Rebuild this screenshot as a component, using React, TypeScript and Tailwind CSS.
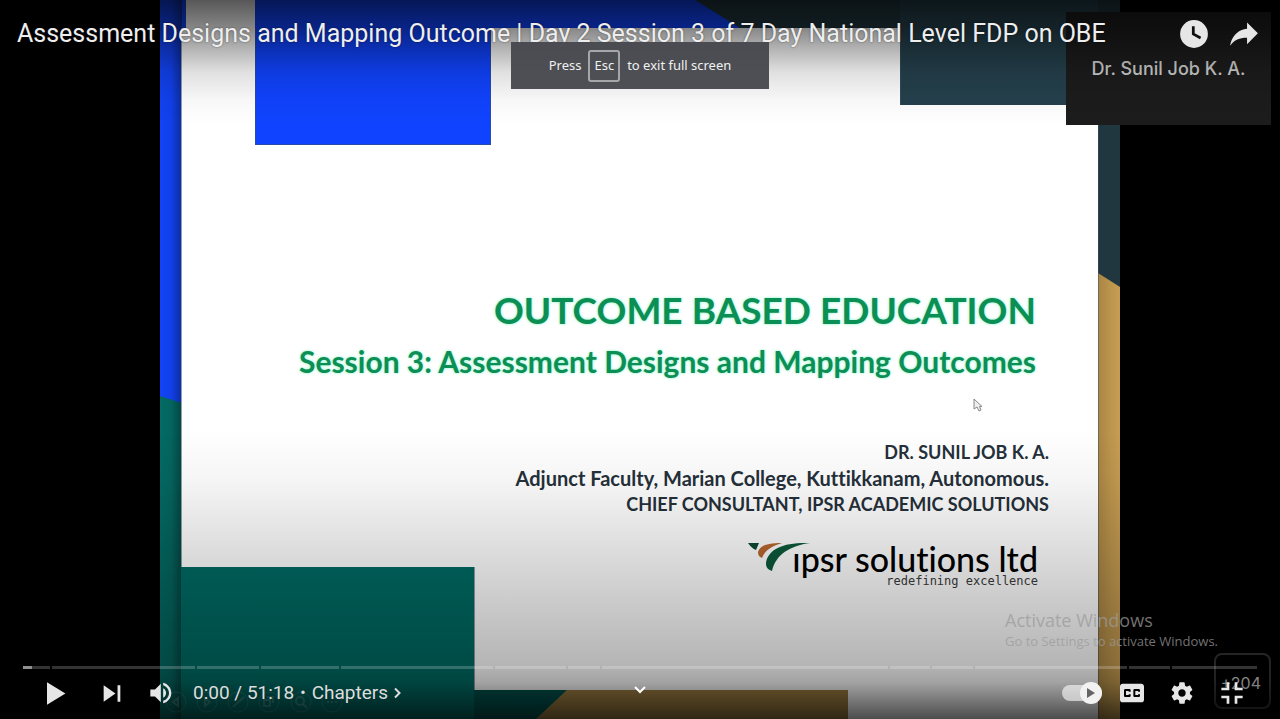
import type { ReactNode } from "react";

// chapter lengths along the seek bar
const chapters = [27, 143, 62, 78, 152, 71, 32, 287, 40, 41, 152, 41, 85];

const slideTools = [16, 47, 78, 109, 141, 172];

function Icon({ className, children }: { className: string; children: ReactNode }) {
  return (
    <svg viewBox="0 0 36 36" fill="currentColor" fillRule="evenodd" className={className} aria-hidden="true">
      {children}
    </svg>
  );
}

function ControlButton({ label, className = "w-[50px]", children }: { label: string; className?: string; children: ReactNode }) {
  return (
    <button type="button" aria-label={label} className={`flex h-12 shrink-0 items-center justify-center ${className}`}>
      {children}
    </button>
  );
}

function SlideArt() {
  return (
    <svg viewBox="0 0 960 719" preserveAspectRatio="none" className="absolute inset-0 h-full w-full" aria-hidden="true">
      <defs>
        <linearGradient id="edge" x1="0" x2="1">
          <stop offset="0" stopColor="#000" stopOpacity="0" />
          <stop offset="0.5" stopColor="#000" stopOpacity="0.05" />
          <stop offset="1" stopColor="#000" stopOpacity="0.35" />
        </linearGradient>
        <linearGradient id="gold" x1="0" x2="1">
          <stop offset="0" stopColor="#a98443" />
          <stop offset="0.6" stopColor="#bd964d" />
          <stop offset="1" stopColor="#c79c52" />
        </linearGradient>
      </defs>
      <path d="M0 0H535L700 120V420H0Z" fill="#1243f5" />
      <path d="M0 396L22 403L500 560V719H0Z" fill="#046a64" />
      <path d="M535 0H960V288L938 274L580 40Z" fill="#21373f" />
      <path d="M938 273L960 287V719H938Z" fill="url(#gold)" />
      <rect x="0" y="0" width="22" height="719" fill="url(#edge)" />
      <rect x="26" y="0" width="70" height="28" fill="#fff" />
      <path d="M21 28H938V719H688V690H21Z" fill="#fff" />
      <path d="M95 0H535L580 28H331V145H95Z" fill="#1043ff" />
      <rect x="740" y="0" width="198" height="105" fill="#25414d" />
      <rect x="21" y="567" width="293" height="152" fill="#006b64" />
      <path d="M314 690H406L376 719H314Z" fill="#00554f" />
      <path d="M407 690H688V719H376Z" fill="#a28143" />
      <path d="M21.500 28V567M95.500 28V144.500H330.500V28M740.500 28V105M314.500 567V690M938.500 105V719" fill="none" stroke="#3d5560" strokeOpacity="0.55" />
      {slideTools.map((x) => (
        <circle key={x} cx={x} cy="702" r="10" fill="none" stroke="#8fb5b0" strokeOpacity="0.25" />
      ))}
      <g fill="none" stroke="#8fb5b0" strokeOpacity="0.35" strokeWidth="2">
        <path d="M18 698L13 702L18 706Z M45 698L50 702L45 706Z M73 707L84 697 M104 700h6v6h-6z M107 697h6v6" />
        <circle cx="140" cy="701" r="4" />
        <path d="M143 704L147 708M167 702h2M171 702h2M175 702h2" />
      </g>
    </svg>
  );
}

function Slide() {
  return (
    <div className="relative mx-auto h-full w-3/4 text-right font-['Lato',sans-serif] font-bold [font-variant-ligatures:none]">
      <SlideArt />
      <div className="relative pt-[287px] pr-[84px] text-[#0c8f55] [text-shadow:0_0_3px_#7df0c0]">
        <h2 className="text-[37px] leading-[46px]">OUTCOME BASED EDUCATION</h2>
        <h3 className="mt-2 text-[30px] leading-10">Session 3: Assessment Designs and Mapping Outcomes</h3>
      </div>
      <div className="relative mt-[58px] pr-[71px] text-[18px] leading-[26px] text-[#25303a]">
        <p>DR. SUNIL JOB K. A.</p>
        <p className="text-[20px]">Adjunct Faculty, Marian College, Kuttikkanam, Autonomous.</p>
        <p>CHIEF CONSULTANT, IPSR ACADEMIC SOLUTIONS</p>
      </div>
      <div className="relative mt-[26px] flex items-start justify-end pr-[82px] text-black">
        <svg viewBox="0 0 62 32" className="-mr-[18px] h-8 w-[62px]" aria-hidden="true">
          <path d="M0 0H11L8 7C5 6 2 3 0 0Z" fill="#0c4a34" />
          <path d="M10 9C12 3 18 0 34 0C24 3 17 7 14 15C11 14 10 12 10 9Z" fill="#b8682f" />
          <path d="M18 20C20 7 34 -1 62 0C42 3 28 11 24 28C19 26 18 24 18 20Z" fill="#0c5a3c" />
        </svg>
        <div className="flex flex-col items-end">
          <p className="text-[34px] leading-8 font-medium">ıpsr solutions ltd</p>
          <p className="font-['DejaVu_Sans_Mono',monospace] text-[12px] leading-3 font-normal text-[#3a3a3a]">redefining excellence</p>
        </div>
      </div>
      <svg viewBox="0 0 10 14" className="absolute top-[398px] right-[137px] h-3.5 w-2.5" aria-hidden="true">
        <path d="M1 1V11L4 9L6 13L8 12L6.500 8.500H9Z" fill="#eee" stroke="#888" />
      </svg>
    </div>
  );
}

export default function App() {
  return (
    <main className="relative h-screen w-full overflow-hidden bg-black font-['Roboto',sans-serif] text-[#e6e6e6]">
      <Slide />

      {/* meeting tiles that are part of the recording */}
      <div className="absolute top-3 right-[9px] h-[113px] w-[205px] bg-[#1c1c1c] pt-[45px] text-center font-['Inter',sans-serif] text-[18px] leading-6 font-medium text-[#cfcfcf]">
        Dr. Sunil Job K. A.
      </div>
      <div className="absolute right-[9px] bottom-[10px] h-14 w-[57px] rounded-lg border-2 border-[#333] pt-4 pr-2 text-right font-['Inter',sans-serif] text-[16px] leading-6 text-[#d0d0d0]">
        +204
      </div>

      <div className="absolute inset-x-0 top-0 h-[125px] bg-[linear-gradient(rgba(0,0,0,0.66)_0,rgba(0,0,0,0.47)_28px,rgba(0,0,0,0.3)_48px,rgba(0,0,0,0.12)_72px,rgba(0,0,0,0.03)_100px,transparent_125px)]" />
      <div className="absolute inset-x-0 bottom-0 h-[289px] bg-[linear-gradient(transparent_0,rgba(0,0,0,0.04)_50px,rgba(0,0,0,0.15)_130px,rgba(0,0,0,0.23)_190px,rgba(0,0,0,0.29)_235px,rgba(0,0,0,0.36)_252px,rgba(0,0,0,0.7)_289px)]" />

      <header className="absolute inset-x-0 top-0 flex h-[67px] items-center pr-[11px] pl-[17px]">
        <h1 className="flex-1 truncate text-[25px] leading-8 text-[#eee] [text-shadow:0_0_2px_rgba(0,0,0,0.5)]">
          Assessment Designs and Mapping Outcome | Day 2 Session 3 of 7 Day National Level FDP on OBE
        </h1>
        <ControlButton label="Watch later">
          <Icon className="size-[50px]">
            <path d="M18 8a10 10 0 1 0 0 20a10 10 0 1 0 0-20ZM16.500 12.500H18.500V17.500L23.200 20L22.300 21.800L16.500 18.600Z" />
          </Icon>
        </ControlButton>
        <ControlButton label="Share">
          <Icon className="size-[50px]">
            <path d="m 20.20,14.19 0,-4.45 7.79,7.79 -7.79,7.79 0,-4.56 C 16.27,20.69 12.10,21.81 9.34,24.76 8.80,25.13 7.60,27.29 8.12,25.65 9.08,21.32 11.80,17.18 15.98,15.38 c 1.33,-0.60 2.76,-0.98 4.21,-1.19 z" />
          </Icon>
        </ControlButton>
      </header>

      <div className="absolute top-[42px] left-1/2 flex h-[47px] w-[258px] -translate-x-1/2 items-center justify-center gap-[7px] bg-[#45474c]/95 font-['Noto_Sans',sans-serif] text-[13px] text-[#f0f0f0]">
        <span>Press</span>
        <kbd className="flex h-8 items-center rounded-[3px] border-2 border-[#a5a6a8] px-1 font-['Noto_Sans',sans-serif]">Esc</kbd>
        <span>to exit full screen</span>
      </div>

      <div className="absolute top-[608px] left-[1005px] font-['Open_Sans',sans-serif] text-[#9b9b9b]/75">
        <p className="text-[18px] leading-6">Activate Windows</p>
        <p className="text-[13px] leading-[18px]">Go to Settings to activate Windows.</p>
      </div>

      <footer className="absolute inset-x-0 bottom-0 h-[53px] px-[23px]">
        <div className="relative flex h-[3px] gap-0.5">
          {chapters.map((length, i) => (
            <div key={i} className="h-full basis-0 bg-white/20" style={{ flexGrow: length }}>
              {i === 0 && <div className="h-full w-1/3 bg-white/45" />}
            </div>
          ))}
          <input type="range" aria-label="Seek" defaultValue={0} className="absolute inset-0 h-full w-full opacity-0" />
        </div>

        <div className="flex h-12 items-center">
          <ControlButton label="Play" className="w-16">
            <Icon className="size-[51px]">
              <path d="M12 10L25 18L12 26Z" />
            </Icon>
          </ControlButton>
          <ControlButton label="Next">
            <Icon className="size-[51px]">
              <path d="M12 24L20.500 18L12 12ZM22 12V24H24V12Z" />
            </Icon>
          </ControlButton>
          <ControlButton label="Mute">
            <Icon className="size-[42px]">
              <path d="M8,21 L12,21 L17,26 L17,10 L12,15 L8,15 Z M19,14 L19,22 C20.48,21.32 21.5,19.77 21.5,18 C21.5,16.26 20.48,14.74 19,14 Z M19,11.29 C21.89,12.15 24,14.83 24,18 C24,21.17 21.89,23.85 19,24.71 L19,26.77 C23.01,25.86 26,22.28 26,18 C26,13.72 23.01,10.14 19,9.23 Z" />
            </Icon>
          </ControlButton>
          <div className="flex flex-1 items-center pl-1.5 text-[19px] text-[#ddd]">
            <span>0:00 / 51:18</span>
            <span className="px-1.5 text-[16px]">•</span>
            <button type="button" className="flex items-center">
              Chapters
              <svg viewBox="0 0 8 12" className="ml-1.5 h-3 w-2" fill="none" stroke="currentColor" strokeWidth="2" aria-hidden="true">
                <path d="M1 1.500L5.500 6L1 10.500" />
              </svg>
            </button>
          </div>
          <label className="relative flex w-[50px] items-center justify-center">
            <input type="checkbox" defaultChecked aria-label="Autoplay" className="absolute inset-0 opacity-0" />
            <span className="flex h-4 w-10 items-center justify-end rounded-full bg-white/60">
              <span className="flex size-[22px] shrink-0 items-center justify-center rounded-full bg-[#f2f2f2] text-[#666]">
                <svg viewBox="0 0 8 10" className="h-2.5 w-2" fill="currentColor" aria-hidden="true">
                  <path d="M0 0L8 5L0 10Z" />
                </svg>
              </span>
            </span>
          </label>
          <ControlButton label="Subtitles">
            <Icon className="size-12">
              <path d="M11,11 C9.9,11 9,11.9 9,13 L9,23 C9,24.1 9.9,25 11,25 L25,25 C26.1,25 27,24.1 27,23 L27,13 C27,11.9 26.1,11 25,11 Z M17,17 L15.5,17 L15.5,16.5 L13.5,16.5 L13.5,19.5 L15.5,19.5 L15.5,19 L17,19 L17,20 C17,20.55 16.55,21 16,21 L13,21 C12.45,21 12,20.55 12,20 L12,16 C12,15.45 12.45,15 13,15 L16,15 C16.55,15 17,15.45 17,16 Z M24,17 L22.5,17 L22.5,16.5 L20.5,16.5 L20.5,19.5 L22.5,19.5 L22.5,19 L24,19 L24,20 C24,20.55 23.55,21 23,21 L20,21 C19.45,21 19,20.55 19,20 L19,16 C19,15.45 19.45,15 20,15 L23,15 C23.55,15 24,15.45 24,16 Z" />
            </Icon>
          </ControlButton>
          <ControlButton label="Settings">
            <Icon className="size-12">
              <path d="m 23.94,18.78 c .03,-0.25 .05,-0.51 .05,-0.78 0,-0.27 -0.02,-0.52 -0.05,-0.78 l 1.68,-1.32 c .15,-0.12 .19,-0.33 .09,-0.51 l -1.6,-2.76 c -0.09,-0.17 -0.31,-0.24 -0.48,-0.17 l -1.99,.8 c -0.41,-0.32 -0.86,-0.58 -1.35,-0.78 l -0.30,-2.12 c -0.02,-0.19 -0.19,-0.33 -0.39,-0.33 l -3.2,0 c -0.2,0 -0.36,.14 -0.39,.33 l -0.30,2.12 c -0.48,.2 -0.93,.47 -1.35,.78 l -1.99,-0.8 c -0.18,-0.07 -0.39,0 -0.48,.17 l -1.6,2.76 c -0.10,.17 -0.05,.39 .09,.51 l 1.68,1.32 c -0.03,.25 -0.05,.52 -0.05,.78 0,.26 .02,.52 .05,.78 l -1.68,1.32 c -0.15,.12 -0.19,.33 -0.09,.51 l 1.6,2.76 c .09,.17 .31,.24 .48,.17 l 1.99,-0.8 c .41,.32 .86,.58 1.35,.78 l .30,2.12 c .02,.19 .19,.33 .39,.33 l 3.2,0 c .2,0 .36,-0.14 .39,-0.33 l .30,-2.12 c .48,-0.2 .93,-0.47 1.35,-0.78 l 1.99,.8 c .18,.07 .39,0 .48,-0.17 l 1.6,-2.76 c .09,-0.17 .05,-0.39 -0.09,-0.51 l -1.68,-1.32 z m -5.94,2.01 c -1.54,0 -2.8,-1.25 -2.8,-2.8 0,-1.54 1.25,-2.8 2.8,-2.8 1.54,0 2.8,1.25 2.8,2.8 0,1.54 -1.25,2.8 -2.8,2.8 z" />
            </Icon>
          </ControlButton>
          <ControlButton label="Exit full screen">
            <Icon className="size-12">
              <path d="M14 14H10V16H16V10H14ZM22 14V10H20V16H26V14ZM20 26H22V22H26V20H20ZM10 22H14V26H16V20H10Z" />
            </Icon>
          </ControlButton>
        </div>

        <button type="button" aria-label="More videos" className="absolute top-5 left-1/2 flex h-10 w-10 -translate-x-1/2 justify-center text-white">
          <svg viewBox="0 0 12 8" className="h-2 w-3" fill="none" stroke="currentColor" strokeWidth="2" aria-hidden="true">
            <path d="M1 1L6 6L11 1" />
          </svg>
        </button>
      </footer>
    </main>
  );
}
